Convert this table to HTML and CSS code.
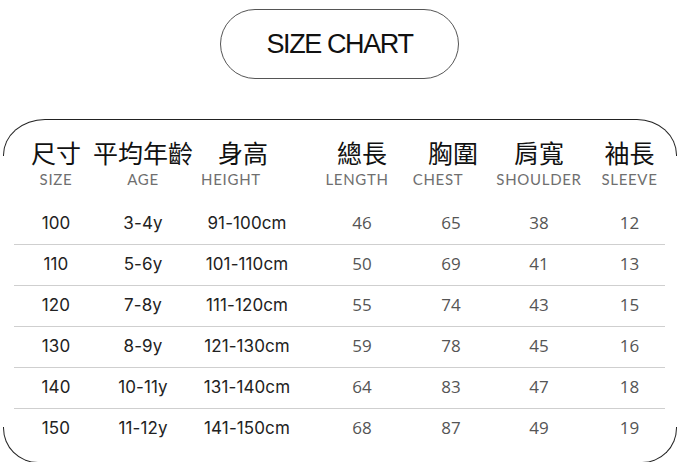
FILE: index.html
```html
<!DOCTYPE html>
<html lang="zh-Hant">
<head>
<meta charset="utf-8">
<title>Size Chart</title>
<link rel="stylesheet" href="styles.css">
</head>
<body>
<div class="page">
  <div class="title-wrap">
    <div class="pill">SIZE CHART</div>
  </div>

  <div class="frame-top"></div>
  <div class="frame-bottom"></div>

  <section class="chart">
    <div class="head">
      <div class="hcell"><span class="zh">尺寸</span><span class="en">SIZE</span></div>
      <div class="hcell"><span class="zh">平均年齡</span><span class="en">AGE</span></div>
      <div class="hcell"><span class="zh zh-height">身高</span><span class="en en-height">HEIGHT</span></div>
      <div class="hcell"><span class="zh">總長</span><span class="en en-length">LENGTH</span></div>
      <div class="hcell"><span class="zh zh-chest">胸圍</span><span class="en en-chest">CHEST</span></div>
      <div class="hcell"><span class="zh">肩寬</span><span class="en">SHOULDER</span></div>
      <div class="hcell"><span class="zh">袖長</span><span class="en">SLEEVE</span></div>
    </div>

    <div class="row"><span class="a">100</span><span class="a">3-4y</span><span class="a">91-100cm</span><span class="b">46</span><span class="b">65</span><span class="b">38</span><span class="b">12</span></div>
    <div class="row"><span class="a">110</span><span class="a">5-6y</span><span class="a">101-110cm</span><span class="b">50</span><span class="b">69</span><span class="b">41</span><span class="b">13</span></div>
    <div class="row"><span class="a">120</span><span class="a">7-8y</span><span class="a">111-120cm</span><span class="b">55</span><span class="b">74</span><span class="b">43</span><span class="b">15</span></div>
    <div class="row"><span class="a">130</span><span class="a">8-9y</span><span class="a">121-130cm</span><span class="b">59</span><span class="b">78</span><span class="b">45</span><span class="b">16</span></div>
    <div class="row"><span class="a">140</span><span class="a">10-11y</span><span class="a">131-140cm</span><span class="b">64</span><span class="b">83</span><span class="b">47</span><span class="b">18</span></div>
    <div class="row last"><span class="a">150</span><span class="a">11-12y</span><span class="a">141-150cm</span><span class="b">68</span><span class="b">87</span><span class="b">49</span><span class="b">19</span></div>
  </section>
</div>
</body>
</html>
```

FILE: styles.css
```css
html, body {
  margin: 0;
  padding: 0;
  background: #fff;
  overflow: hidden;
}

.page {
  position: relative;
  width: 680px;
  height: 462px;
  overflow: hidden;
  background: #fff;
}

.title-wrap {
  display: flex;
  justify-content: center;
  padding-top: 9px;
}

.pill {
  width: 237px;
  height: 68px;
  border: 1px solid #555;
  border-radius: 36px;
  display: flex;
  align-items: center;
  justify-content: center;
  font-family: "Liberation Sans", Arial, sans-serif;
  font-size: 27px;
  letter-spacing: -1.4px;
  color: #111;
  margin-left: -1px;
}

.frame-top {
  position: absolute;
  left: 3px;
  top: 119px;
  width: 672px;
  height: 36px;
  border: 1px solid #222;
  border-bottom: none;
  border-radius: 42px 40px 0 0 / 36px 36px 0 0;
}

.frame-bottom {
  position: absolute;
  left: 3px;
  top: 427px;
  width: 672px;
  height: 35px;
  border: 1px solid #222;
  border-top: none;
  border-radius: 0 0 35px 35px;
}

.chart {
  margin-top: 40px;
  margin-left: 14px;
  width: 651px;
}

.head,
.row {
  display: grid;
  grid-template-columns: 84px 90px 118px 112px 66px 110px 71px;
}

.head {
  padding-top: 18px;
  padding-bottom: 15px;
}

.hcell {
  display: flex;
  flex-direction: column;
  align-items: center;
}

.zh {
  font-family: "Noto Sans CJK TC", "Noto Sans CJK SC", sans-serif;
  font-size: 25px;
  line-height: 30px;
  color: #111;
  white-space: nowrap;
}

.en {
  margin-top: 2px;
  font-family: Lato, "Open Sans", sans-serif;
  font-size: 15px;
  line-height: 20px;
  letter-spacing: 0.7px;
  color: #6f6f6f;
  white-space: nowrap;
}

.zh-height { margin-right: 8px; }
.en-height { margin-right: 32px; }
.en-length { margin-right: 10px; }
.zh-chest { margin-left: 4px; }
.en-chest { margin-right: 26px; }

.row {
  height: 40px;
  border-bottom: 1px solid #cfcfcf;
  align-items: center;
}

.row.last {
  border-bottom: none;
}

.row span {
  text-align: center;
  white-space: nowrap;
  padding-bottom: 3px;
}

.a {
  font-family: Inter, Lato, sans-serif;
  font-size: 17px;
  letter-spacing: 0.1px;
  color: #222;
}

.b {
  font-family: "Open Sans", "Noto Sans", sans-serif;
  font-size: 17px;
  color: #555;
}
```
